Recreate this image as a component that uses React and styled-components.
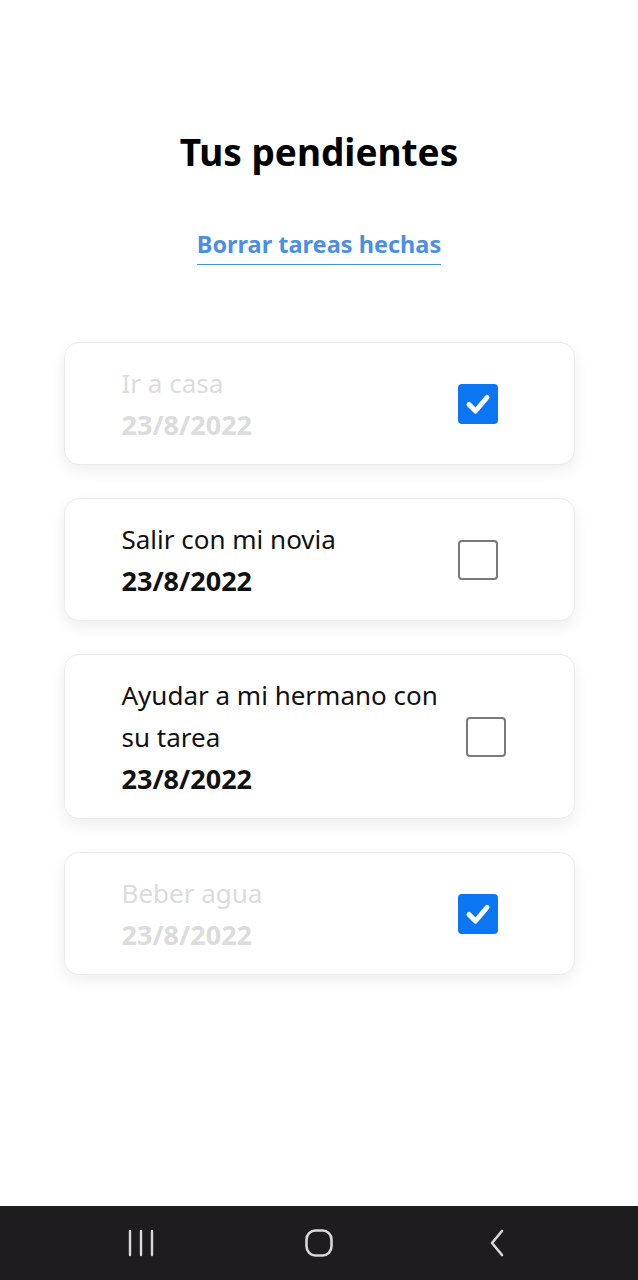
import React from 'react'
import styled, { createGlobalStyle } from 'styled-components'

const GlobalStyle = createGlobalStyle`
  html, body {
    margin: 0;
    padding: 0;
    background: #ffffff;
  }
  body {
    font-family: "Noto Sans", "Open Sans", sans-serif;
  }
`

const Screen = styled.div`
  width: 638px;
  height: 1280px;
  display: flex;
  flex-direction: column;
  background: #fff;
`

const Main = styled.main`
  flex: 1;
  display: flex;
  flex-direction: column;
  align-items: center;
  padding-top: 124px;
`

const Title = styled.h1`
  margin: 0;
  font-size: 37px;
  font-weight: 700;
  color: #000;
  line-height: 56px;
`

const ClearLink = styled.a`
  margin-top: 48px;
  font-size: 23.5px;
  font-weight: 700;
  color: #4a90e2;
  text-decoration: none;
  padding-bottom: 4px;
  border-bottom: 1px solid #4a90e2;
  line-height: 32px;
  cursor: pointer;
`

const List = styled.ul`
  list-style: none;
  margin: 77px 0 0;
  padding: 0;
  width: 511px;
  display: flex;
  flex-direction: column;
  gap: 33px;
`

const Card = styled.li`
  display: flex;
  align-items: center;
  box-sizing: border-box;
  padding: 19px 0 19px 57px;
  background: #fff;
  border: 1px solid #ececec;
  border-radius: 15px;
  box-shadow: 0 6px 16px rgba(0, 0, 0, 0.07);
`

const TextCol = styled.div`
  flex: 1;
  max-width: ${props => props.$wrap ? '318px' : 'none'};
  color: ${props => props.$done ? '#dcdcdc' : '#111'};
`

const TaskName = styled.div`
  font-size: 26px;
  line-height: 42px;
`

const TaskDate = styled.div`
  font-size: 27px;
  font-weight: 700;
  line-height: 41px;
`

const Box = styled.span`
  width: 40px;
  height: 40px;
  box-sizing: border-box;
  flex-shrink: 0;
  margin-left: ${props => props.$wrap ? '26px' : 'auto'};
  margin-right: ${props => props.$wrap ? 'auto' : '76px'};
  border-radius: 4px;
  display: flex;
  align-items: center;
  justify-content: center;
  background: ${props => props.$checked ? '#0a76f2' : '#fff'};
  border: ${props => props.$checked ? 'none' : '2px solid #7a7a7a'};
`

const NavBar = styled.nav`
  height: 74px;
  background: #1e1c1f;
  display: flex;
  align-items: center;
  justify-content: center;
  gap: 150px;
`

const NavIcon = styled.svg`
  display: block;
`

const Check = () => (
  <svg width="28" height="28" viewBox="0 0 28 28">
    <path d="M5 14.5 L11.5 21 L23 7.5" fill="none" stroke="#fff" strokeWidth="5" strokeLinecap="round" strokeLinejoin="round" />
  </svg>
)

const tasks = [
  { name: 'Ir a casa', date: '23/8/2022', done: true },
  { name: 'Salir con mi novia', date: '23/8/2022', done: false },
  { name: 'Ayudar a mi hermano con su tarea', date: '23/8/2022', done: false, wrap: true },
  { name: 'Beber agua', date: '23/8/2022', done: true },
]

function App() {
  return (
    <>
      <GlobalStyle />
      <Screen>
        <Main>
          <Title>Tus pendientes</Title>
          <ClearLink>Borrar tareas hechas</ClearLink>
          <List>
            {tasks.map((t, i) => (
              <Card key={i}>
                <TextCol $done={t.done} $wrap={t.wrap}>
                  <TaskName>{t.name}</TaskName>
                  <TaskDate>{t.date}</TaskDate>
                </TextCol>
                <Box $checked={t.done} $wrap={t.wrap}>
                  {t.done && <Check />}
                </Box>
              </Card>
            ))}
          </List>
        </Main>
        <NavBar>
          <NavIcon width="28" height="28" viewBox="0 0 28 28">
            <g stroke="#d8d8d8" strokeWidth="2.4" strokeLinecap="round">
              <line x1="3" y1="2" x2="3" y2="26" />
              <line x1="14" y1="2" x2="14" y2="26" />
              <line x1="25" y1="2" x2="25" y2="26" />
            </g>
          </NavIcon>
          <NavIcon width="28" height="28" viewBox="0 0 28 28">
            <rect x="1.5" y="1.5" width="25" height="25" rx="9" fill="none" stroke="#d8d8d8" strokeWidth="2.6" />
          </NavIcon>
          <NavIcon width="28" height="28" viewBox="0 0 28 28">
            <path d="M19 2 L9 14 L19 26" fill="none" stroke="#d8d8d8" strokeWidth="2.6" strokeLinecap="round" strokeLinejoin="round" />
          </NavIcon>
        </NavBar>
      </Screen>
    </>
  )
}

export default App
